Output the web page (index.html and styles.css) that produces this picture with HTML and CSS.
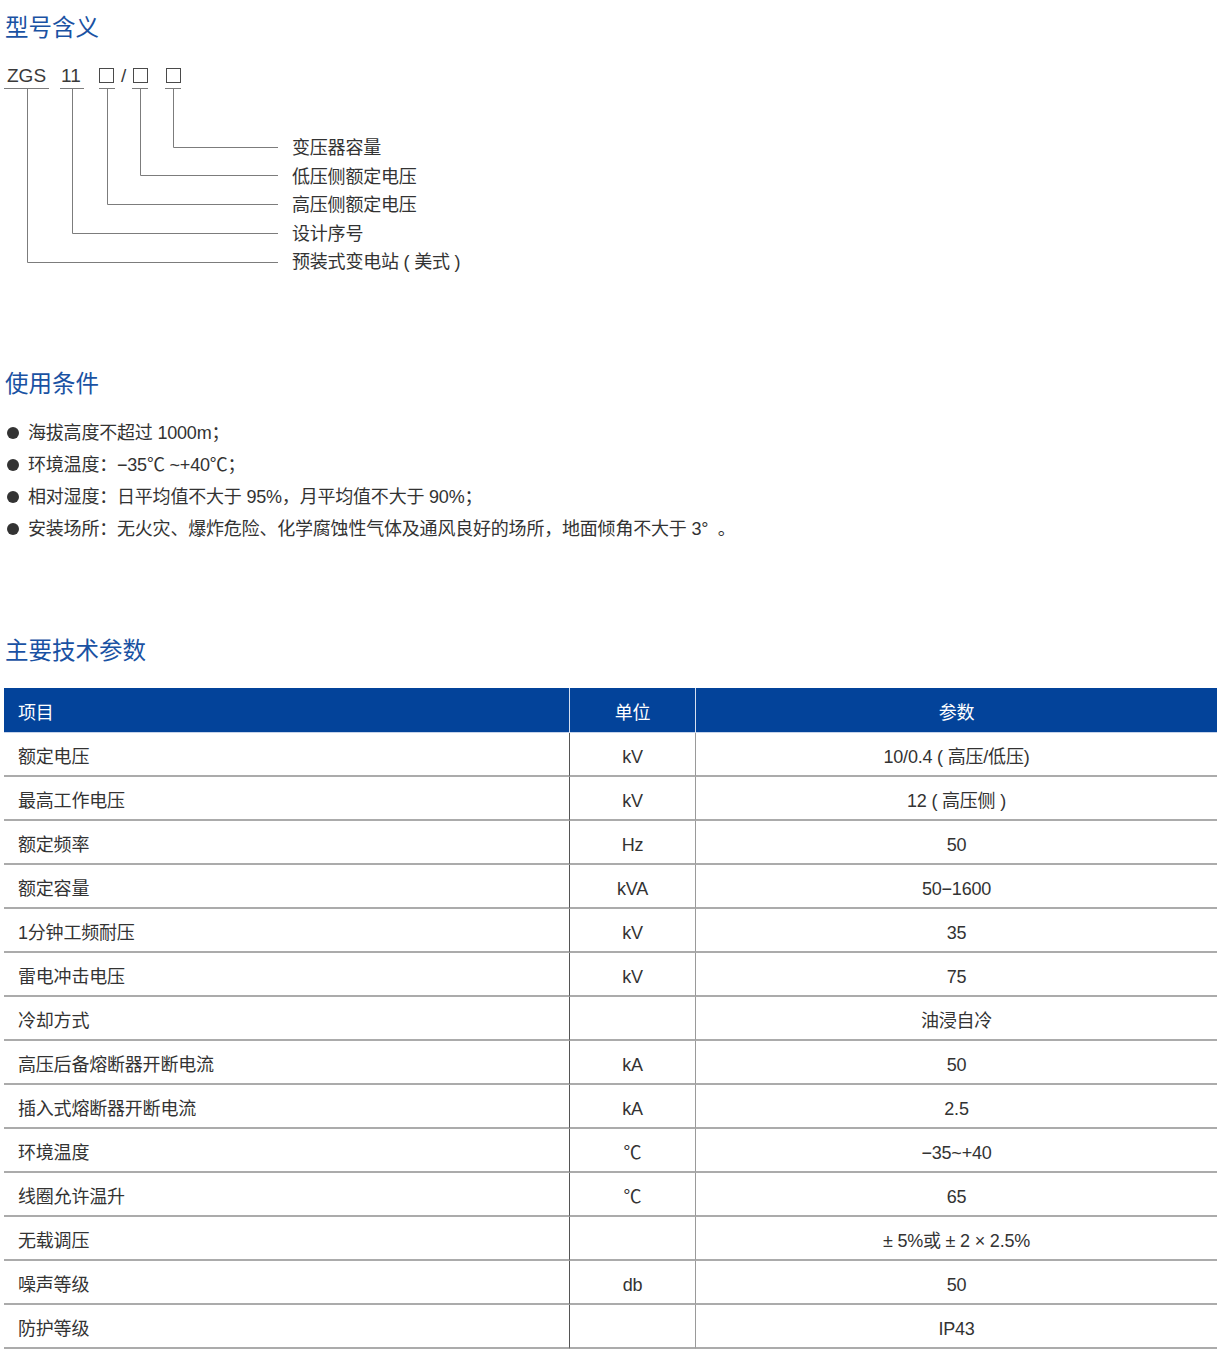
FILE: index.html
```html
<!DOCTYPE html>
<html lang="zh-CN">
<head>
<meta charset="utf-8">
<title>ZGS11 预装式变电站</title>
<link rel="stylesheet" href="styles.css">
</head>
<body>
<div class="page">
  <h2 class="title title-first">型号含义</h2>
  <svg class="diagram" width="480" height="248" viewBox="4 42 480 248" xmlns="http://www.w3.org/2000/svg">
    <g class="code">
      <text x="7" y="82">ZGS</text>
      <text x="61" y="82">11</text>
      <text x="121" y="82">/</text>
    </g>
    <g class="boxes">
      <rect x="99.5" y="68.5" width="14" height="14"/>
      <rect x="133.5" y="68.5" width="14" height="14"/>
      <rect x="166.5" y="68.5" width="14" height="14"/>
    </g>
    <g class="lines">
      <path d="M4 88.5H49M60 88.5H84M99 88.5H115M132 88.5H148M165 88.5H181"/>
      <path d="M27.5 88V262.5H278"/>
      <path d="M72.5 88V233.5H278"/>
      <path d="M107.5 88V204.5H278"/>
      <path d="M140.5 88V175.5H278"/>
      <path d="M173.5 88V147.5H278"/>
    </g>
    <g class="labels">
      <text x="292" y="154">变压器容量</text>
      <text x="292" y="183">低压侧额定电压</text>
      <text x="292" y="211">高压侧额定电压</text>
      <text x="292" y="240">设计序号</text>
      <text x="292" y="268">预装式变电站 ( 美式 )</text>
    </g>
  </svg>

  <h2 class="title title-cond">使用条件</h2>
  <ul class="conditions">
    <li><span class="dot"></span>海拔高度不超过 1000m；</li>
    <li><span class="dot"></span>环境温度：−35℃ ~+40℃；</li>
    <li><span class="dot"></span>相对湿度：日平均值不大于 95%，月平均值不大于 90%；</li>
    <li><span class="dot"></span>安装场所：无火灾、爆炸危险、化学腐蚀性气体及通风良好的场所，地面倾角不大于 3°&nbsp; 。</li>
  </ul>

  <h2 class="title title-params">主要技术参数</h2>
  <table class="params">
    <colgroup>
      <col class="c1">
      <col class="c2">
      <col class="c3">
    </colgroup>
    <thead>
      <tr><th class="left">项目</th><th>单位</th><th>参数</th></tr>
    </thead>
    <tbody>
      <tr><td>额定电压</td><td>kV</td><td>10/0.4 ( 高压/低压)</td></tr>
      <tr><td>最高工作电压</td><td>kV</td><td>12 ( 高压侧 )</td></tr>
      <tr><td>额定频率</td><td>Hz</td><td>50</td></tr>
      <tr><td>额定容量</td><td>kVA</td><td>50−1600</td></tr>
      <tr><td>1分钟工频耐压</td><td>kV</td><td>35</td></tr>
      <tr><td>雷电冲击电压</td><td>kV</td><td>75</td></tr>
      <tr><td>冷却方式</td><td></td><td>油浸自冷</td></tr>
      <tr><td>高压后备熔断器开断电流</td><td>kA</td><td>50</td></tr>
      <tr><td>插入式熔断器开断电流</td><td>kA</td><td>2.5</td></tr>
      <tr><td>环境温度</td><td>℃</td><td>−35~+40</td></tr>
      <tr><td>线圈允许温升</td><td>℃</td><td>65</td></tr>
      <tr><td>无载调压</td><td></td><td>± 5%或 ± 2 × 2.5%</td></tr>
      <tr><td>噪声等级</td><td>db</td><td>50</td></tr>
      <tr><td>防护等级</td><td></td><td>IP43</td></tr>
    </tbody>
  </table>
</div>
</body>
</html>
```

FILE: styles.css
```css
html, body {
  margin: 0;
  padding: 0;
  background: #ffffff;
}

body {
  font-family: "Liberation Sans", "Noto Sans CJK SC", sans-serif;
  color: #333333;
  font-size: 18px;
}

.page {
  width: 1213px;
  padding: 0 3px 10px 4px;
}

.title {
  margin: 0;
  font-family: "Noto Sans CJK SC", sans-serif;
  font-weight: 400;
  font-size: 23.5px;
  line-height: 30px;
  color: #1a52a3;
  padding-left: 1px;
}

.title-first { padding-top: 11px; }
.title-cond { margin-top: 77px; }
.title-params { margin-top: 89px; }

.diagram {
  display: block;
  margin-top: 1px;
}

.diagram .code text {
  font-family: "Liberation Sans", sans-serif;
  font-size: 19px;
  fill: #3a3a3a;
}

.diagram .boxes rect {
  fill: none;
  stroke: #4a4a4a;
  stroke-width: 1;
}

.diagram .lines path {
  fill: none;
  stroke: #7c7c7c;
  stroke-width: 1;
}

.diagram .labels text {
  font-family: "Liberation Sans", "Noto Sans CJK SC", sans-serif;
  font-size: 18px;
  letter-spacing: -0.2px;
  fill: #333333;
}

.conditions {
  list-style: none;
  margin: 20px 0 0;
  padding: 0 0 0 3px;
}

.conditions li {
  display: flex;
  align-items: center;
  height: 32px;
  line-height: 32px;
  letter-spacing: -0.2px;
}

.dot {
  width: 12px;
  height: 12px;
  border-radius: 50%;
  background: #333333;
  margin-right: 9px;
  flex: none;
}

.params {
  margin-top: 24px;
  width: 1213px;
  table-layout: fixed;
  border-collapse: separate;
  border-spacing: 0;
  font-size: 18px;
  letter-spacing: -0.2px;
}

.params col.c1 { width: 566px; }
.params col.c2 { width: 126px; }
.params col.c3 { width: 521px; }

.params th {
  background: #03439a;
  color: #ffffff;
  font-weight: 400;
  height: 44px;
  padding: 6px 0 0;
  line-height: 38px;
  text-align: center;
  border-bottom: 1px solid #c6d3ea;
  border-right: 1px solid #d6dff0;
  box-sizing: border-box;
}

.params th.left {
  text-align: left;
  padding-left: 14px;
}

.params th:last-child {
  border-right: none;
}

.params td {
  padding: 6px 0 0;
  height: 44px;
  line-height: 36px;
  text-align: center;
  border-bottom: 2px solid #ababab;
  box-sizing: border-box;
}

.params td:first-child {
  text-align: left;
  padding-left: 14px;
  border-right: 1px solid #555555;
}

.params td:nth-child(2) {
  border-right: 1px solid #9a9a9a;
}
```
